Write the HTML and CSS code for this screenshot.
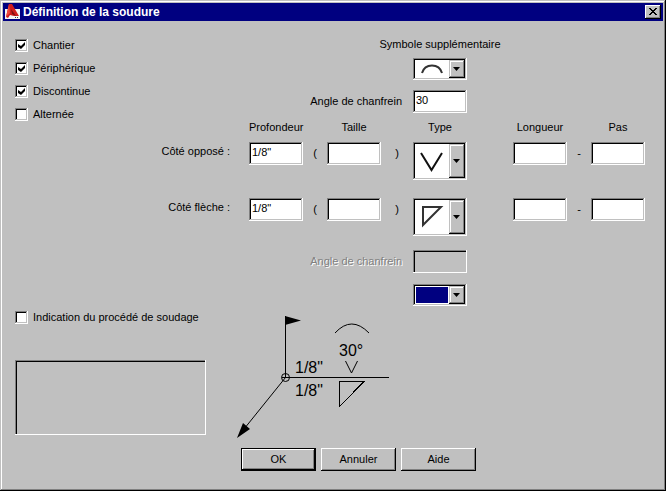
FILE: index.html
```html
<!DOCTYPE html>
<html lang="fr">
<head>
    <meta charset="UTF-8">
    <meta name="viewport" content="width=device-width, initial-scale=1.0">
    <title>Définition de la soudure</title>
    <link rel="stylesheet" href="styles.css">
</head>
<body>
    <form class="dialog">
        <header class="titlebar">
            <svg class="logo" width="18" height="16" viewBox="0 0 18 16" aria-hidden="true">
                <path d="M2 5H17V15H2Z" fill="#f4f4f4"/>
                <path d="M3 13L6 0H9L16 12L11 12L7 11L5 14Z" fill="#d01c1c"/>
                <path d="M6 0L3 13L7 9Z" fill="#f04a3c"/>
                <path d="M8 5L13 12L9 10Z" fill="#7c0d10"/>
                <path d="M12 13.500H13M14 13.500H15" stroke="#444" fill="none"/>
            </svg>
            <h1>Définition de la soudure</h1>
            <button type="button" class="close" aria-label="Fermer">
                <svg width="8" height="7" viewBox="0 0 8 7" shape-rendering="crispEdges">
                    <path d="M0 0h2v1h1v1h2v-1h1v-1h2v1h-1v1h-1v1h-1v1h1v1h1v1h1v1h-2v-1h-1v-1h-2v1h-1v1h-2v-1h1v-1h1v-1h1v-1h-1v-1h-1v-1h-1z"/>
                </svg>
            </button>
        </header>

        <main class="content">
            <section class="weld">
                <div class="options">
                    <label class="check"><input type="checkbox" checked>Chantier</label>
                    <label class="check"><input type="checkbox" checked>Périphérique</label>
                    <label class="check"><input type="checkbox" checked>Discontinue</label>
                    <label class="check"><input type="checkbox">Alternée</label>
                </div>

                <label class="symbol-label" for="symbol">Symbole supplémentaire</label>
                <div class="combo symbol">
                    <select id="symbol"><option aria-label="Convexe"></option></select>
                    <svg class="glyph" width="32" height="18" viewBox="0 0 32 18" aria-hidden="true">
                        <path d="M7 13C10 3 24 3 27 13" fill="none" stroke="#333" stroke-width="2"/>
                    </svg>
                    <span class="arrow"></span>
                </div>

                <label class="angle-label" for="angle">Angle de chanfrein</label>
                <input class="field angle" id="angle" type="text" value="30">

                <span class="head c2">Profondeur</span>
                <span class="head c4">Taille</span>
                <span class="head c6">Type</span>
                <span class="head c8">Longueur</span>
                <span class="head c10">Pas</span>

                <label class="side other" for="depth-other">Côté opposé :</label>
                <input class="field other c2" id="depth-other" type="text" value='1/8"'>
                <span class="sign other c3">(</span>
                <input class="field other c4" type="text" aria-label="Taille, côté opposé">
                <span class="sign other c5">)</span>
                <div class="combo tall other c6">
                    <select aria-label="Type, côté opposé"><option aria-label="V"></option></select>
                    <svg class="glyph" width="34" height="34" viewBox="0 0 34 34" aria-hidden="true">
                        <path d="M6 9L16.500 26L27 9" fill="none" stroke="#111" stroke-width="2"/>
                    </svg>
                    <span class="arrow"></span>
                </div>
                <input class="field other c8" type="text" aria-label="Longueur, côté opposé">
                <span class="sign other c9">-</span>
                <input class="field other c10" type="text" aria-label="Pas, côté opposé">

                <label class="side near" for="depth-near">Côté flèche :</label>
                <input class="field near c2" id="depth-near" type="text" value='1/8"'>
                <span class="sign near c3">(</span>
                <input class="field near c4" type="text" aria-label="Taille, côté flèche">
                <span class="sign near c5">)</span>
                <div class="combo tall near c6">
                    <select aria-label="Type, côté flèche"><option aria-label="Angle"></option></select>
                    <svg class="glyph" width="34" height="34" viewBox="0 0 34 34" aria-hidden="true">
                        <path d="M8 7H26L8 25Z" fill="none" stroke="#333" stroke-width="2"/>
                    </svg>
                    <span class="arrow"></span>
                </div>
                <input class="field near c8" type="text" aria-label="Longueur, côté flèche">
                <span class="sign near c9">-</span>
                <input class="field near c10" type="text" aria-label="Pas, côté flèche">

                <label class="angle-label off" for="angle-near">Angle de chanfrein</label>
                <input class="field angle-near" id="angle-near" type="text" disabled>
                <div class="combo contour">
                    <select aria-label="Contour"><option aria-label="Aucun"></option></select>
                    <span class="arrow"></span>
                </div>
            </section>

            <section class="lower">
                <div class="process">
                    <label class="check"><input type="checkbox" id="process">Indication du procédé de soudage</label>
                    <textarea aria-label="Procédé de soudage" disabled></textarea>
                </div>
                <div class="preview">
                    <svg class="diagram" width="180" height="132" viewBox="225 310 180 132" role="img" aria-label="Aperçu du symbole">
                        <g fill="none" stroke="#000" shape-rendering="crispEdges">
                            <path d="M285.5 316V377M282 377.5H389"/>
                            <path d="M339.5 381.5H364L339.5 406.5Z"/>
                        </g>
                        <g fill="none" stroke="#000">
                            <circle cx="285.5" cy="377.5" r="4"/>
                            <path d="M285.5 377.5L240 434"/>
                            <path d="M335 333Q351.500 315 369 333"/>
                            <path d="M345.500 361L351.500 373L357.500 361"/>
                        </g>
                        <path d="M285 316L301 320.500L285 325ZM237 438L243 423L250 429Z"/>
                        <text x="339" y="356">30°</text>
                        <text x="295" y="373">1/8"</text>
                        <text x="295" y="396">1/8"</text>
                    </svg>
                    <div class="buttons">
                        <button type="submit" class="btn default">OK</button>
                        <button type="button" class="btn">Annuler</button>
                        <button type="button" class="btn">Aide</button>
                    </div>
                </div>
            </section>
        </main>
    </form>
</body>
</html>
```
FILE: styles.css
```css
* {
    box-sizing: border-box;
}
body {
    margin: 0;
    background-color: #c0c0c0;
    color: #000;
    font: 11px/15px "Liberation Sans", Arial, sans-serif;
}
input, select, textarea, button {
    margin: 0;
    border-radius: 0;
    appearance: none;
    font: inherit;
    color: #000;
}
.dialog {
    min-height: 100vh;
    padding: 3px;
    background-color: #c0c0c0;
    box-shadow: inset -1px -1px #000, inset 1px 1px #c0c0c0,
        inset -2px -2px #808080, inset 2px 2px #fff;
}

/* title bar */
.titlebar {
    display: flex;
    align-items: center;
    gap: 2px;
    height: 18px;
    padding-right: 2px;
    background-color: #000080;
}
.titlebar h1 {
    flex: 1;
    margin: 0;
    color: #fff;
    font-size: 12px;
    font-weight: bold;
}
.close {
    display: flex;
    align-items: center;
    justify-content: center;
    width: 16px;
    height: 14px;
    padding: 0 1px 1px 0;
    border: 0;
    background-color: #c0c0c0;
    box-shadow: inset -1px -1px #000, inset 1px 1px #fff, inset -2px -2px #808080;
}

/* weld settings */
.content {
    padding: 17px 18px 0 12px;
}
.weld {
    display: grid;
    grid-template-columns: 1fr 54px 24px 54px 32px 54px 46px 54px 24px 54px;
    grid-template-rows: 20px 32px 30px 22px 56px 52px 34px 26px;
    align-items: start;
}
.options {
    display: flex;
    flex-direction: column;
    gap: 8px;
    grid-area: 1 / 1 / 5 / 2;
}
.check {
    display: flex;
    align-items: center;
    gap: 5px;
}
.check input {
    width: 13px;
    height: 13px;
    background-color: #fff;
    box-shadow: inset -1px -1px #fff, inset 1px 1px #808080,
        inset -2px -2px #c0c0c0, inset 2px 2px #000;
}
.check input:checked::before {
    content: "";
    display: block;
    width: 7px;
    height: 7px;
    margin: 3px;
    background-color: #000;
    clip-path: polygon(0 28%, 43% 57%, 100% 0, 100% 43%, 43% 100%, 0 71%);
}
.symbol-label {
    grid-area: 1 / 6;
    justify-self: center;
    line-height: 13px;
    white-space: nowrap;
}
.symbol { grid-area: 2 / 6; }
.angle { grid-area: 3 / 6; }
.angle-label {
    grid-area: 3 / 2 / 4 / 6;
    padding-right: 11px;
    line-height: 23px;
    text-align: right;
}
.angle-label.off {
    grid-row: 7;
    color: #808080;
    text-shadow: 1px 1px #fff;
}
.angle-near { grid-area: 7 / 6; }
.contour { grid-area: 8 / 6; }
.head {
    grid-row: 4;
    text-align: center;
}
.side {
    grid-column: 1;
    padding-right: 19px;
    line-height: 19px;
    text-align: right;
}
.sign {
    line-height: 23px;
    text-align: center;
}
.other { grid-row: 5; }
.near { grid-row: 6; }
.c2 { grid-column: 2; }
.c3 { grid-column: 3; }
.c4 { grid-column: 4; }
.c5 { grid-column: 5; }
.c6 { grid-column: 6; }
.c8 { grid-column: 8; }
.c9 { grid-column: 9; }
.c10 { grid-column: 10; }

.field, .combo select, textarea {
    display: block;
    width: 100%;
    border: 0;
    background-color: #fff;
    box-shadow: inset -1px -1px #fff, inset 1px 1px #808080,
        inset -2px -2px #c0c0c0, inset 2px 2px #000;
}
.field {
    height: 23px;
    padding: 2px 3px 5px;
}
.field:disabled, textarea:disabled {
    background-color: #c0c0c0;
    box-shadow: inset -1px -1px #fff, inset 1px 1px #808080, inset 2px 2px #000;
}

/* picture drop-downs */
.combo {
    position: relative;
    height: 22px;
}
.combo.tall {
    height: 38px;
}
.combo select {
    height: 100%;
}
.glyph {
    position: absolute;
    top: 2px;
    left: 2px;
    pointer-events: none;
}
.arrow {
    position: absolute;
    top: 2px;
    right: 2px;
    bottom: 2px;
    width: 16px;
    background-color: #c0c0c0;
    box-shadow: inset -1px -1px #000, inset 1px 1px #c0c0c0,
        inset -2px -2px #808080, inset 2px 2px #fff;
    pointer-events: none;
}
.arrow::before {
    content: "";
    position: absolute;
    top: calc(50% - 2px);
    left: 4px;
    width: 7px;
    height: 4px;
    background-color: #000;
    clip-path: polygon(0 0, 100% 0, 50% 100%);
}
.contour::before {
    content: "";
    position: absolute;
    top: 3px;
    left: 3px;
    bottom: 3px;
    width: 32px;
    background-color: #000080;
    pointer-events: none;
}

/* process and preview */
.lower {
    display: flex;
    gap: 19px;
}
.process {
    width: 191px;
    flex: none;
}
.process textarea {
    height: 75px;
    margin-top: 35px;
    resize: none;
}
.diagram {
    display: block;
}
.diagram text {
    font-size: 16px;
}
.buttons {
    display: flex;
    gap: 5px;
    padding: 6px 0 12px 16px;
}
.btn {
    width: 75px;
    height: 23px;
    padding: 0;
    border: 0;
    background-color: #c0c0c0;
    box-shadow: inset -1px -1px #000, inset 1px 1px #fff, inset -2px -2px #808080;
}
.btn.default {
    box-shadow: inset 0 0 0 1px #000, inset -2px -2px #000,
        inset 2px 2px #fff, inset -3px -3px #808080;
}
```
